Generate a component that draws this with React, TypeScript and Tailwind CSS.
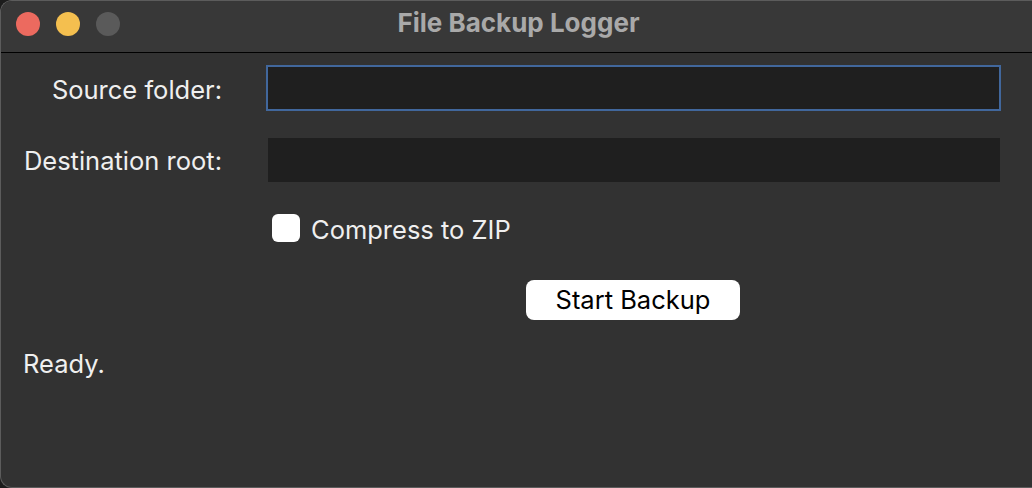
import React from "react";

function TrafficLights() {
  return (
    <div className="flex gap-[16px] pl-[15px] pb-[5px]">
      <span className="w-[24px] h-[24px] rounded-full bg-[#ec6a5f]" />
      <span className="w-[24px] h-[24px] rounded-full bg-[#f4bf4f]" />
      <span className="w-[24px] h-[24px] rounded-full bg-[#5a5a5a]" />
    </div>
  );
}

export default function App() {
  return (
    <div className="w-[1032px] h-[488px] bg-[#1c1c1c] overflow-hidden" style={{ fontFamily: "Inter, 'Noto Sans', sans-serif" }}>
      <div className="h-full rounded-l-[12px] border-l border-y border-[#5c5c5c] overflow-hidden flex flex-col bg-[#323232]">
        <div className="relative h-[52px] shrink-0 bg-[#383838] border-b border-black flex items-center">
          <TrafficLights />
          <div className="absolute inset-0 flex items-center justify-center pl-[4px] pb-[8px] pointer-events-none">
            <span className="text-[26px] leading-[30px] font-bold text-[#a9a9a9]">File Backup Logger</span>
          </div>
        </div>

        <div className="flex flex-col text-[25.5px] leading-[28px] text-[#efefef]">
          <div className="flex items-center mt-[12px]">
            <label className="w-[221px] text-right pt-[3px]">Source folder:</label>
            <div className="ml-[44px] w-[735px] h-[46px] bg-[#1f1f1f] border-2 border-[#41679c]" />
          </div>

          <div className="flex items-center mt-[27px]">
            <label className="w-[221px] text-right pt-[2px]">Destination root:</label>
            <div className="ml-[46px] w-[732px] h-[44px] bg-[#1f1f1f]" />
          </div>

          <div className="flex items-center mt-[32px] pl-[271px] h-[28px]">
            <span className="w-[28px] h-[28px] rounded-[6px] bg-white" />
            <span className="ml-[11px] pt-[4px]">Compress to ZIP</span>
          </div>

          <div className="flex mt-[38px] pl-[525px]">
            <button className="w-[214px] h-[40px] rounded-[8px] bg-white text-black text-[25.5px] leading-[28px] flex items-center justify-center">
              Start Backup
            </button>
          </div>

          <div className="mt-[30px] pl-[22px]">Ready.</div>
        </div>
      </div>
    </div>
  );
}
